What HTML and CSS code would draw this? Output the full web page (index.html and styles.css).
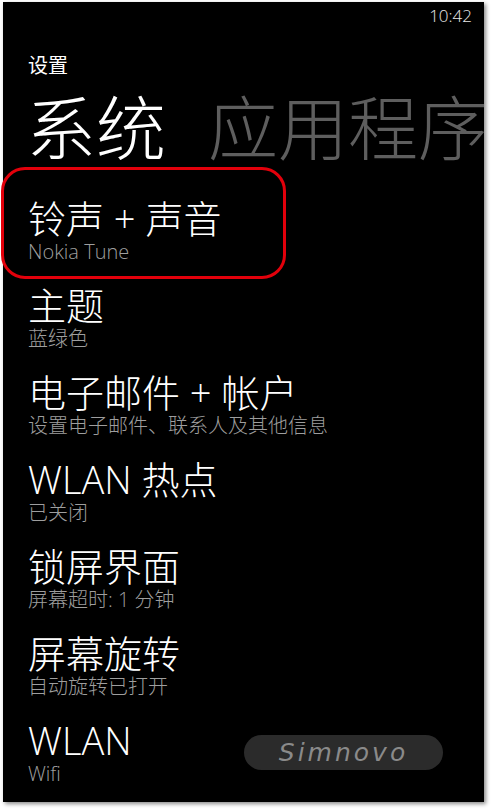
FILE: index.html
```html
<!DOCTYPE html>
<html lang="zh-CN">
<head>
<meta charset="utf-8">
<title>设置</title>
<link rel="stylesheet" href="styles.css">
</head>
<body>
<div class="phone">
  <div class="status"><span class="time">10:42</span></div>
  <div class="app-title">设置</div>
  <div class="pivot">
    <span class="pivot-item active">系统</span>
    <span class="pivot-item">应用程序</span>
  </div>
  <ul class="list">
    <li class="item"><div class="title">铃声 + 声音</div><div class="sub">Nokia Tune</div></li>
    <li class="item"><div class="title">主题</div><div class="sub">蓝绿色</div></li>
    <li class="item"><div class="title">电子邮件 + 帐户</div><div class="sub">设置电子邮件、联系人及其他信息</div></li>
    <li class="item"><div class="title">WLAN 热点</div><div class="sub">已关闭</div></li>
    <li class="item"><div class="title">锁屏界面</div><div class="sub">屏幕超时: 1 分钟</div></li>
    <li class="item"><div class="title">屏幕旋转</div><div class="sub">自动旋转已打开</div></li>
    <li class="item"><div class="title">WLAN</div><div class="sub">Wifi</div></li>
  </ul>
  <div class="watermark">Simnovo</div>
</div>
<div class="highlight"></div>
</body>
</html>
```
FILE: styles.css
```css
html, body {
  margin: 0;
  padding: 0;
  background: #ffffff;
}
body {
  position: relative;
  width: 491px;
  height: 810px;
  overflow: hidden;
  font-family: "Open Sans", "Noto Sans CJK SC", sans-serif;
}
.phone {
  position: relative;
  width: 481px;
  height: 800px;
  margin: 2px 0 0 3px;
  background: #000000;
  color: #ffffff;
  box-shadow: 2px 2px 4px rgba(0, 0, 0, 0.45);
}
.status {
  display: flex;
  justify-content: flex-end;
  height: 30px;
  padding: 4px 12px 0 0;
  box-sizing: border-box;
}
.time {
  font-size: 17px;
  line-height: 20px;
  font-weight: 300;
  color: #e8e8e8;
}
.app-title {
  margin: 21px 0 0 25px;
  font-family: "Noto Sans CJK SC", sans-serif;
  font-size: 20px;
  line-height: 24px;
  font-weight: 400;
}
.pivot {
  display: flex;
  gap: 42px;
  margin: 11px 0 0 23px;
  overflow: hidden;
  white-space: nowrap;
  font-family: "Noto Sans CJK SC", sans-serif;
  font-size: 70px;
  line-height: 74px;
  font-weight: 300;
  color: #5e5e5e;
}
.pivot-item {
  flex: none;
}
.pivot-item.active {
  color: #ffffff;
}
.list {
  list-style: none;
  margin: 36px 0 0 0;
  padding: 0 0 0 25px;
}
.item {
  padding-bottom: 20px;
}
.title {
  font-family: "Open Sans", "Noto Sans CJK SC", sans-serif;
  font-size: 38px;
  line-height: 41px;
  font-weight: 300;
  color: #ffffff;
  white-space: nowrap;
}
.sub {
  font-family: "Open Sans", "Noto Sans CJK SC", sans-serif;
  font-size: 20px;
  line-height: 26px;
  font-weight: 300;
  color: #9e9e9e;
  white-space: nowrap;
}
.watermark {
  position: absolute;
  left: 241px;
  top: 733px;
  width: 199px;
  height: 35px;
  border-radius: 18px;
  background: #2b2b2b;
  color: #8a8a8a;
  font-family: "DejaVu Sans", sans-serif;
  font-style: italic;
  font-size: 25px;
  line-height: 35px;
  letter-spacing: 3px;
  text-align: center;
}
.highlight {
  position: absolute;
  left: 1px;
  top: 167px;
  width: 279px;
  height: 106px;
  border: 3px solid #e3000b;
  border-radius: 24px;
}
```
